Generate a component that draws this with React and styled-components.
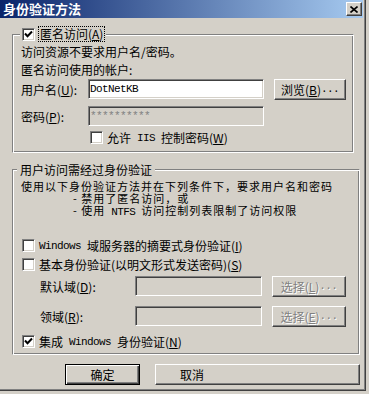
import React from "react";
import styled, { createGlobalStyle } from "styled-components";

const GlobalStyle = createGlobalStyle`
  html, body {
    margin: 0;
    padding: 0;
    background: #d4d0c8;
  }
  body {
    font-family: "Noto Sans CJK SC", "Liberation Sans", sans-serif;
    font-size: 12px;
    color: #000;
  }
`;

const Window = styled.div`
  width: 366px;
  height: 391px;
  box-sizing: border-box;
  background: #d4d0c8;
  box-shadow: inset -1px -1px 0 #404040, inset -2px -2px 0 #808080;
  display: flex;
  flex-direction: column;
`;

const TitleBar = styled.div`
  width: 363px;
  height: 18px;
  box-sizing: border-box;
  padding-left: 3px;
  display: flex;
  align-items: center;
  background: linear-gradient(90deg, #0a246a 0%, #a6caf0 100%);
  color: #fff;
  font-weight: bold;
  font-size: 13px;
  line-height: 18px;
`;

const CloseButton = styled.div`
  margin-left: auto;
  margin-right: 1px;
  width: 16px;
  height: 14px;
  box-sizing: border-box;
  background: #d4d0c8;
  border: 1px solid;
  border-color: #fff #404040 #404040 #fff;
  box-shadow: inset -1px -1px 0 #808080;
  display: flex;
  align-items: center;
  justify-content: center;
`;

const Body = styled.div`
  padding: 9px 0 0 12px;
  display: flex;
  flex-direction: column;
`;

const Group = styled.fieldset`
  width: ${(p) => p.$w}px;
  box-sizing: border-box;
  margin: ${(p) => p.$mt || 0}px 0 0 0;
  padding: 0 8px ${(p) => p.$pb}px 8px;
  min-width: 0;
  border: 1px solid;
  border-color: #808080 #fff #fff #808080;
  box-shadow: inset 1px 1px 0 #fff, inset -1px -1px 0 #808080;
  display: flex;
  flex-direction: column;
`;

const Legend = styled.legend`
  margin-left: ${(p) => p.$ml}px;
  padding: 0 ${(p) => p.$px}px;
  background: #d4d0c8;
  line-height: 13px;
  height: ${(p) => p.$h}px;
`;

const LegendInner = styled.span`
  display: flex;
  align-items: center;
  height: 100%;
`;

const FocusLabel = styled.span`
  margin-left: 2px;
  padding: 0 1px;
  outline: 1px dotted #000;
  line-height: 14px;
`;

const Line = styled.div`
  margin-top: ${(p) => p.$mt || 0}px;
  padding-left: ${(p) => p.$indent || 0}px;
  height: ${(p) => (p.$tight ? 12 : 12)}px;
  line-height: 12px;
  font-size: ${(p) => (p.$tight ? 11 : 12)}px;
  letter-spacing: ${(p) => (p.$tight ? 1 : 0)}px;
  white-space: nowrap;
`;

const FieldRow = styled.div`
  margin-top: ${(p) => p.$mt}px;
  padding-left: ${(p) => p.$indent || 0}px;
  height: 20px;
  display: flex;
  align-items: center;
`;

const Label = styled.span`
  width: ${(p) => p.$w}px;
  flex-shrink: 0;
  white-space: nowrap;
`;

const Input = styled.div`
  width: ${(p) => p.$w}px;
  height: 20px;
  box-sizing: border-box;
  padding-left: 1px;
  border: 1px solid;
  border-color: #808080 #fff #fff #808080;
  box-shadow: inset 1px 1px 0 #404040, inset -1px -1px 0 #d4d0c8;
  background: ${(p) => (p.$disabled ? "#d4d0c8" : "#fff")};
  color: ${(p) => (p.$disabled ? "#808080" : "#000")};
  display: flex;
  align-items: center;
  flex-shrink: 0;
`;

const Button = styled.div`
  width: ${(p) => p.$w}px;
  height: ${(p) => p.$h || 21}px;
  margin-left: ${(p) => p.$ml || 0}px;
  box-sizing: border-box;
  border: 1px solid;
  border-color: ${(p) =>
    p.$default ? "#000" : "#fff #404040 #404040 #fff"};
  box-shadow: ${(p) =>
    p.$default
      ? "inset 1px 1px 0 #fff, inset -1px -1px 0 #404040, inset -2px -2px 0 #808080"
      : "inset -1px -1px 0 #808080"};
  background: #d4d0c8;
  color: ${(p) => (p.$disabled ? "#808080" : "#000")};
  text-shadow: ${(p) => (p.$disabled ? "1px 1px 0 #fff" : "none")};
  display: flex;
  align-items: center;
  justify-content: ${(p) => (p.$left ? "flex-start" : "center")};
  padding-left: ${(p) => p.$pl || 0}px;
  flex-shrink: 0;
  white-space: nowrap;
`;

const CheckRow = styled.div`
  margin-top: ${(p) => p.$mt}px;
  padding-left: ${(p) => p.$indent || 0}px;
  height: 13px;
  display: flex;
  align-items: center;
  white-space: nowrap;
`;

const CheckBox = styled.span`
  width: 13px;
  height: 13px;
  box-sizing: border-box;
  flex-shrink: 0;
  background: #fff;
  border: 1px solid;
  border-color: #808080 #fff #fff #808080;
  box-shadow: inset 1px 1px 0 #404040, inset -1px -1px 0 #d4d0c8;
  display: flex;
  align-items: center;
  justify-content: center;
  margin-right: ${(p) => p.$mr || 4}px;
`;

const Lat = styled.span`
  font-family: "Liberation Mono", monospace;
  font-size: 11px;
  letter-spacing: -0.6px;
  white-space: pre;
`;

const Mn = styled.span`
  text-decoration: underline;
`;

const ButtonRow = styled.div`
  margin-top: 9px;
  padding-left: 53px;
  display: flex;
  gap: 15px;
`;

const Check = ({ checked, mr }) => (
  <CheckBox $mr={mr}>
    {checked && (
      <svg width="9" height="9" viewBox="0 0 9 9">
        <path d="M1 3.5 L3.5 6.2 L8 1.5" fill="none" stroke="#000" strokeWidth="2" />
      </svg>
    )}
  </CheckBox>
);

export default function App() {
  return (
    <>
      <GlobalStyle />
      <Window>
        <TitleBar>
          身份验证方法
          <CloseButton>
            <svg width="8" height="7" viewBox="0 0 8 7">
              <path d="M0.5 0.5 L7.5 6.5 M7.5 0.5 L0.5 6.5" stroke="#000" strokeWidth="1.6" />
            </svg>
          </CloseButton>
        </TitleBar>

        <Body>
          <Group $w={342} $pb={8}>
            <Legend $ml={-1} $px={2} $h={14}>
              <LegendInner>
                <Check checked mr={2} />
                <FocusLabel>
                  匿名访问(<Mn>A</Mn>)
                </FocusLabel>
              </LegendInner>
            </Legend>

            <Line $mt={5}>访问资源不要求用户名/密码。</Line>
            <Line $mt={6}>匿名访问使用的帐户:</Line>

            <FieldRow $mt={3}>
              <Label $w={67}>
                用户名(<Mn>U</Mn>):
              </Label>
              <Input $w={176}>
                <Lat>DotNetKB</Lat>
              </Input>
              <Button $w={72} $ml={10}>
                浏览(<Mn>B</Mn>)<Lat>...</Lat>
              </Button>
            </FieldRow>

            <FieldRow $mt={7}>
              <Label $w={67}>
                密码(<Mn>P</Mn>):
              </Label>
              <Input $w={176} $disabled>
                <Lat>**********</Lat>
              </Input>
            </FieldRow>

            <CheckRow $mt={5} $indent={69}>
              <Check />
              允许<Lat> IIS </Lat>控制密码(<Mn>W</Mn>)
            </CheckRow>
          </Group>

          <Group $w={348} $pb={6} $mt={10}>
            <Legend $ml={-4} $px={3} $h={13}>
              用户访问需经过身份验证
            </Legend>

            <Line $mt={4} $tight>
              使用以下身份验证方法并在下列条件下，要求用户名和密码
            </Line>
            <Line $indent={52} $tight>
              - 禁用了匿名访问，或
            </Line>
            <Line $indent={52} $tight>
              - 使用<Lat> NTFS </Lat>访问控制列表限制了访问权限
            </Line>

            <CheckRow $mt={23} $indent={1}>
              <Check />
              <Lat>Windows </Lat>域服务器的摘要式身份验证(<Mn>I</Mn>)
            </CheckRow>

            <CheckRow $mt={6} $indent={1}>
              <Check />
              基本身份验证(以明文形式发送密码)(<Mn>S</Mn>)
            </CheckRow>

            <FieldRow $mt={5} $indent={19}>
              <Label $w={95}>
                默认域(<Mn>D</Mn>):
              </Label>
              <Input $w={127} $disabled />
              <Button $w={74} $ml={10} $disabled>
                选择(<Mn>L</Mn>)<Lat>...</Lat>
              </Button>
            </FieldRow>

            <FieldRow $mt={10} $indent={19}>
              <Label $w={95}>
                领域(<Mn>R</Mn>):
              </Label>
              <Input $w={127} $disabled />
              <Button $w={74} $ml={10} $disabled>
                选择(<Mn>E</Mn>)<Lat>...</Lat>
              </Button>
            </FieldRow>

            <CheckRow $mt={9} $indent={1}>
              <Check checked />
              集成<Lat> Windows </Lat>身份验证(<Mn>N</Mn>)
            </CheckRow>
          </Group>

          <ButtonRow>
            <Button $w={75} $default>
              确定
            </Button>
            <Button $w={205} $left $pl={24}>
              取消
            </Button>
          </ButtonRow>
        </Body>
      </Window>
    </>
  );
}
